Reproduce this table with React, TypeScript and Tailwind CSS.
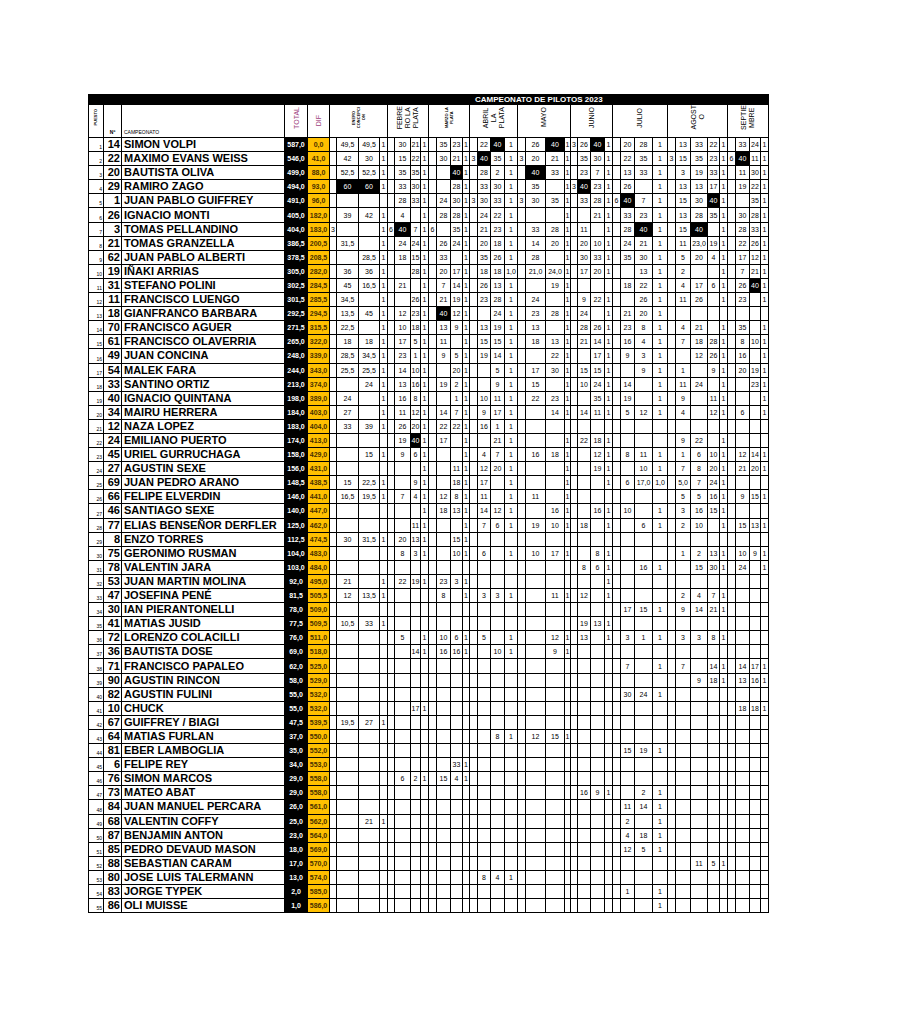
import React from 'react';
import clsx from 'clsx';

type Row = [string, string, string, string, string[]];

// widths of every column, left to right (5 fixed + 9 event groups)
const COL_WIDTHS = [
  'w-[15px]', 'w-[18px]', 'w-[163px]', 'w-[23px]', 'w-[22px]',
  // ENERO
  'w-[7px]', 'w-[22px]', 'w-[21px]', 'w-[8px]',
  // FEBRERO
  'w-[7px]', 'w-[16px]', 'w-[10px]', 'w-[8px]',
  // MARZO
  'w-[8px]', 'w-[14px]', 'w-[12px]', 'w-[7px]',
  // ABRIL
  'w-[8px]', 'w-[13px]', 'w-[14px]', 'w-[13px]',
  // MAYO
  'w-[8px]', 'w-[20px]', 'w-[19px]', 'w-[6px]',
  // JUNIO
  'w-[7px]', 'w-[13px]', 'w-[14px]', 'w-[8px]',
  // JULIO
  'w-[8px]', 'w-[14px]', 'w-[18px]', 'w-[15px]',
  // AGOSTO
  'w-[8px]', 'w-[15px]', 'w-[17px]', 'w-[12px]', 'w-[8px]',
  // SEPTIEMBRE
  'w-[8px]', 'w-[14px]', 'w-[11px]', 'w-[8px]',
];

const EVENT_COLS = [4, 4, 4, 4, 4, 4, 4, 5, 4];

const EVENTS: { lines: string[]; size: 'tiny' | 'normal' }[] = [
  { lines: ['ENERO', 'CONCEPCI', 'ON'], size: 'tiny' },
  { lines: ['FEBRE', 'RO LA', 'PLATA'], size: 'normal' },
  { lines: ['MARZO LA', 'PLATA'], size: 'tiny' },
  { lines: ['ABRIL', 'LA', 'PLATA'], size: 'normal' },
  { lines: ['MAYO'], size: 'normal' },
  { lines: ['JUNIO'], size: 'normal' },
  { lines: ['JULIO'], size: 'normal' },
  { lines: ['AGOST', 'O'], size: 'normal' },
  { lines: ['SEPTIE', 'MBRE'], size: 'normal' },
];

// values per event separated by ';'  —  '*' marks a black cell
const ROWS: Row[] = [
  ['14', 'SIMON VOLPI', '587,0', '0,0', [';49,5;49,5;1', ';30;21;1', ';35;23;1', ';22;*40;1', ';26;*40;1', '3;26;*40;1', ';20;28;1', ';13;33;22;1', ';33;24;1']],
  ['22', 'MAXIMO EVANS WEISS', '546,0', '41,0', [';42;30;1', ';15;22;1', ';30;21;1', '3;*40;35;1', '3;20;21;1', ';35;30;1', ';22;35;1', '3;15;35;23;1', '6;*40;11;1']],
  ['20', 'BAUTISTA OLIVA', '499,0', '88,0', [';52,5;52,5;1', ';35;35;1', ';;*40;1', ';28;2;1', ';*40;33;1', ';23;7;1', ';13;33;1', ';3;19;33;1', ';11;30;1']],
  ['29', 'RAMIRO ZAGO', '494,0', '93,0', [';*60;*60;1', ';33;30;1', ';;28;1', ';33;30;1', ';35;;1', '3;*40;23;1', ';26;;1', ';13;13;17;1', ';19;22;1']],
  ['1', 'JUAN PABLO GUIFFREY', '491,0', '96,0', ['', ';28;33;1', ';24;30;1', '3;30;33;1', '3;30;35;1', ';33;28;1', '6;*40;7;1', ';15;30;*40;1', ';;35;1']],
  ['26', 'IGNACIO MONTI', '405,0', '182,0', [';39;42;1', ';4;;1', ';28;28;1', ';24;22;1', ';;;1', ';;21;1', ';33;23;1', ';13;28;35;1', ';30;28;1']],
  ['3', 'TOMAS PELLANDINO', '404,0', '183,0', ['3;;;1', '6;*40;7;1', '6;;35;1', ';21;23;1', ';33;28;1', ';11;;1', ';28;*40;1', ';15;*40;;1', ';28;33;1']],
  ['21', 'TOMAS GRANZELLA', '386,5', '200,5', [';31,5;;1', ';24;24;1', ';26;24;1', ';20;18;1', ';14;20;1', ';20;10;1', ';24;21;1', ';11;23,0;19;1', ';22;26;1']],
  ['62', 'JUAN PABLO ALBERTI', '378,5', '208,5', [';;28,5;1', ';18;15;1', ';33;;1', ';35;26;1', ';28;;1', ';30;33;1', ';35;30;1', ';5;20;4;1', ';17;12;1']],
  ['19', 'IÑAKI ARRIAS', '305,0', '282,0', [';36;36;1', ';;28;1', ';20;17;1', ';18;18;1,0', ';21,0;24,0;1', ';17;20;1', ';;13;1', ';2;;;1', ';7;21;1']],
  ['31', 'STEFANO POLINI', '302,5', '284,5', [';45;16,5;1', ';21;;1', ';7;14;1', ';26;13;1', ';;19;1', '', ';18;22;1', ';4;17;6;1', ';26;*40;1']],
  ['11', 'FRANCISCO LUENGO', '301,5', '285,5', [';34,5;;1', ';;26;1', ';21;19;1', ';23;28;1', ';24;;1', ';9;22;1', ';;26;1', ';11;26;;1', ';23;;1']],
  ['18', 'GIANFRANCO BARBARA', '292,5', '294,5', [';13,5;45;1', ';12;23;1', ';*40;12;1', ';;24;1', ';23;28;1', ';24;;1', ';21;20;1', '', '']],
  ['70', 'FRANCISCO AGUER', '271,5', '315,5', [';22,5;;1', ';10;18;1', ';13;9;1', ';13;19;1', ';13;;1', ';28;26;1', ';23;8;1', ';4;21;;1', ';35;;1']],
  ['61', 'FRANCISCO OLAVERRIA', '265,0', '322,0', [';18;18;1', ';17;5;1', ';11;;1', ';15;15;1', ';18;13;1', ';21;14;1', ';16;4;1', ';7;18;28;1', ';8;10;1']],
  ['49', 'JUAN CONCINA', '248,0', '339,0', [';28,5;34,5;1', ';23;1;1', ';9;5;1', ';19;14;1', ';;22;1', ';;17;1', ';9;3;1', ';;12;26;1', ';16;;1']],
  ['54', 'MALEK FARA', '244,0', '343,0', [';25,5;25,5;1', ';14;10;1', ';;20;1', ';;5;1', ';17;30;1', ';15;15;1', ';;9;1', ';1;;9;1', ';20;19;1']],
  ['33', 'SANTINO ORTIZ', '213,0', '374,0', [';;24;1', ';13;16;1', ';19;2;1', ';;9;1', ';15;;1', ';10;24;1', ';14;;1', ';11;24;;1', ';;23;1']],
  ['40', 'IGNACIO QUINTANA', '198,0', '389,0', [';24;;1', ';16;8;1', ';;1;1', ';10;11;1', ';22;23;1', ';;35;1', ';19;;1', ';9;;11;1', ';;;1']],
  ['34', 'MAIRU HERRERA', '184,0', '403,0', [';27;;1', ';11;12;1', ';14;7;1', ';9;17;1', ';;14;1', ';14;11;1', ';5;12;1', ';4;;12;1', ';6;;1']],
  ['12', 'NAZA LOPEZ', '183,0', '404,0', [';33;39;1', ';26;20;1', ';22;22;1', ';16;1;1', '', '', '', '', '']],
  ['24', 'EMILIANO PUERTO', '174,0', '413,0', ['', ';19;*40;1', ';17;;1', ';;21;1', ';;;1', ';22;18;1', '', ';9;22;;1', '']],
  ['45', 'URIEL GURRUCHAGA', '158,0', '429,0', [';;15;1', ';9;6;1', ';;;1', ';4;7;1', ';16;18;1', ';;12;1', ';8;11;1', ';1;6;10;1', ';12;14;1']],
  ['27', 'AGUSTIN SEXE', '156,0', '431,0', ['', ';;;1', ';;11;1', ';12;20;1', ';;;1', ';;19;1', ';;10;1', ';7;8;20;1', ';21;20;1']],
  ['69', 'JUAN PEDRO ARANO', '148,5', '438,5', [';15;22,5;1', ';;9;1', ';;18;1', ';17;;1', ';;;1', ';;;1', ';6;17,0;1,0', ';5,0;7;24;1', '']],
  ['66', 'FELIPE ELVERDIN', '146,0', '441,0', [';16,5;19,5;1', ';7;4;1', ';12;8;1', ';11;;1', ';11;;1', '', '', ';5;5;16;1', ';9;15;1']],
  ['46', 'SANTIAGO SEXE', '140,0', '447,0', ['', ';;;1', ';18;13;1', ';14;12;1', ';;16;1', ';;16;1', ';10;;1', ';3;16;15;1', '']],
  ['77', 'ELIAS BENSEÑOR DERFLER', '125,0', '462,0', ['', ';;11;1', ';;;1', ';7;6;1', ';19;10;1', ';18;;1', ';;6;1', ';2;10;;1', ';15;13;1']],
  ['8', 'ENZO TORRES', '112,5', '474,5', [';30;31,5;1', ';20;13;1', ';;15;1', '', '', '', '', '', '']],
  ['75', 'GERONIMO RUSMAN', '104,0', '483,0', ['', ';8;3;1', ';;10;1', ';6;;1', ';10;17;1', ';;8;1', '', ';1;2;13;1', ';10;9;1']],
  ['78', 'VALENTIN JARA', '103,0', '484,0', ['', '', '', '', '', ';8;6;1', ';;16;1', ';;15;30;1', ';24;;1']],
  ['53', 'JUAN MARTIN MOLINA', '92,0', '495,0', [';21;;1', ';22;19;1', ';23;3;1', '', '', ';;;1', '', '', '']],
  ['47', 'JOSEFINA PENÉ', '81,5', '505,5', [';12;13,5;1', '', ';8;;1', ';3;3;1', ';;11;1', ';12;;1', '', ';2;4;7;1', '']],
  ['30', 'IAN PIERANTONELLI', '78,0', '509,0', ['', '', '', '', '', '', ';17;15;1', ';9;14;21;1', '']],
  ['41', 'MATIAS JUSID', '77,5', '509,5', [';10,5;33;1', '', '', '', '', ';19;13;1', '', '', '']],
  ['72', 'LORENZO COLACILLI', '76,0', '511,0', ['', ';5;;1', ';10;6;1', ';5;;1', ';;12;1', ';13;;1', ';3;1;1', ';3;3;8;1', '']],
  ['36', 'BAUTISTA DOSE', '69,0', '518,0', ['', ';;14;1', ';16;16;1', ';;10;1', ';;9;1', '', '', '', '']],
  ['71', 'FRANCISCO PAPALEO', '62,0', '525,0', ['', '', '', '', '', '', ';7;;1', ';7;;14;1', ';14;17;1']],
  ['90', 'AGUSTIN RINCON', '58,0', '529,0', ['', '', '', '', '', '', '', ';;9;18;1', ';13;16;1']],
  ['82', 'AGUSTIN FULINI', '55,0', '532,0', ['', '', '', '', '', '', ';30;24;1', '', '']],
  ['10', 'CHUCK', '55,0', '532,0', ['', ';;17;1', '', '', '', '', '', '', ';18;18;1']],
  ['67', 'GUIFFREY / BIAGI', '47,5', '539,5', [';19,5;27;1', '', '', '', '', '', '', '', '']],
  ['64', 'MATIAS FURLAN', '37,0', '550,0', ['', '', '', ';;8;1', ';12;15;1', '', '', '', '']],
  ['81', 'EBER LAMBOGLIA', '35,0', '552,0', ['', '', '', '', '', '', ';15;19;1', '', '']],
  ['6', 'FELIPE REY', '34,0', '553,0', ['', '', ';;33;1', '', '', '', '', '', '']],
  ['76', 'SIMON MARCOS', '29,0', '558,0', ['', ';6;2;1', ';15;4;1', '', '', '', '', '', '']],
  ['73', 'MATEO ABAT', '29,0', '558,0', ['', '', '', '', '', ';16;9;1', ';;2;1', '', '']],
  ['84', 'JUAN MANUEL PERCARA', '26,0', '561,0', ['', '', '', '', '', '', ';11;14;1', '', '']],
  ['68', 'VALENTIN COFFY', '25,0', '562,0', [';;21;1', '', '', '', '', '', ';2;;1', '', '']],
  ['87', 'BENJAMIN ANTON', '23,0', '564,0', ['', '', '', '', '', '', ';4;18;1', '', '']],
  ['85', 'PEDRO DEVAUD MASON', '18,0', '569,0', ['', '', '', '', '', '', ';12;5;1', '', '']],
  ['88', 'SEBASTIAN CARAM', '17,0', '570,0', ['', '', '', '', '', '', '', ';;11;5;1', '']],
  ['80', 'JOSE LUIS TALERMANN', '13,0', '574,0', ['', '', '', ';8;4;1', '', '', '', '', '']],
  ['83', 'JORGE TYPEK', '2,0', '585,0', ['', '', '', '', '', '', ';1;;1', '', '']],
  ['86', 'OLI MUISSE', '1,0', '586,0', ['', '', '', '', '', '', ';;;1', '', '']],
];

const cellBase = 'border-[1.5px] border-black p-0';

const Rotated = ({ lines, className }: { lines: string[]; className?: string }) => (
  <div className={clsx('inline-block rotate-180 text-center [writing-mode:vertical-rl]', className)}>
    {lines.map((l, i) => (
      <React.Fragment key={i}>
        {i > 0 && <br />}
        {l}
      </React.Fragment>
    ))}
  </div>
);

const ScoreCell = ({ value }: { value: string }) => {
  const black = value.startsWith('*');
  return (
    <td
      className={clsx(
        cellBase,
        'text-center align-middle text-[7px] leading-none',
        black && 'bg-black text-white',
      )}
    >
      {black ? value.slice(1) : value}
    </td>
  );
};

const App = () => {
  return (
    <div className="min-h-screen bg-white pl-[88px] pt-[94px] font-['Liberation_Sans',Arial,sans-serif] text-black">
      <table className="w-[680px] table-fixed border-collapse">
        <colgroup>
          {COL_WIDTHS.map((w, i) => (
            <col key={i} className={w} />
          ))}
        </colgroup>
        <thead>
          {/* Title bar */}
          <tr className="h-[10px]">
            <td colSpan={COL_WIDTHS.length} className={clsx(cellBase, 'bg-black')}>
              <div className="pl-[386px] text-[8px] font-bold leading-[9px] text-white">
                CAMPEONATO DE PILOTOS 2023
              </div>
            </td>
          </tr>
          {/* Column headers */}
          <tr className="h-[33px]">
            <td className={clsx(cellBase, 'pt-[3px] text-center align-top')}>
              <Rotated lines={['PUESTO']} className="text-[4px] font-bold leading-none" />
            </td>
            <td className={clsx(cellBase, 'pb-[2px] text-center align-bottom text-[5px] font-bold leading-none')}>
              Nº
            </td>
            <td className={clsx(cellBase, 'pb-[2px] pl-[2px] text-left align-bottom text-[5px] leading-none')}>
              CAMPEONATO
            </td>
            <td className={clsx(cellBase, 'text-center align-middle')}>
              <Rotated lines={['TOTAL']} className="text-[7px] leading-none text-[#9e3f7e]" />
            </td>
            <td className={clsx(cellBase, 'text-center align-middle')}>
              <Rotated lines={['DIF']} className="text-[7px] leading-none text-[#9e3f7e]" />
            </td>
            {EVENTS.map((ev, i) => (
              <td key={i} colSpan={EVENT_COLS[i]} className={clsx(cellBase, 'text-center align-middle')}>
                <Rotated
                  lines={ev.lines}
                  className={
                    ev.size === 'tiny'
                      ? 'text-[4px] font-bold leading-[5px]'
                      : 'text-[7px] leading-[8px]'
                  }
                />
              </td>
            ))}
          </tr>
        </thead>
        <tbody>
          {ROWS.map(([num, name, total, dif, events], r) => (
            <tr key={r} className="h-[14.1px]">
              <td className={clsx(cellBase, 'pr-[1px] text-right align-bottom text-[5px] leading-[7px]')}>
                {r + 1}
              </td>
              <td className={clsx(cellBase, 'pr-[1px] text-right align-middle text-[11px] font-bold leading-none')}>
                {num}
              </td>
              <td
                className={clsx(
                  cellBase,
                  'overflow-hidden whitespace-nowrap pl-[2px] text-left align-middle text-[11px] font-bold leading-none',
                )}
              >
                {name}
              </td>
              <td className={clsx(cellBase, 'bg-black text-center align-middle text-[7px] font-bold leading-none text-white')}>
                {total}
              </td>
              <td
                className={clsx(
                  cellBase,
                  'bg-[#ffc000] text-center align-middle text-[7px] font-bold leading-none text-[#4a3000]',
                )}
              >
                {dif}
              </td>
              {events.map((ev, e) => {
                const parts = ev === '' ? [] : ev.split(';');
                const cells = Array.from({ length: EVENT_COLS[e] }, (_, k) => parts[k] ?? '');
                return cells.map((v, k) => <ScoreCell key={`${e}-${k}`} value={v} />);
              })}
            </tr>
          ))}
        </tbody>
      </table>
    </div>
  );
};

export default App;
